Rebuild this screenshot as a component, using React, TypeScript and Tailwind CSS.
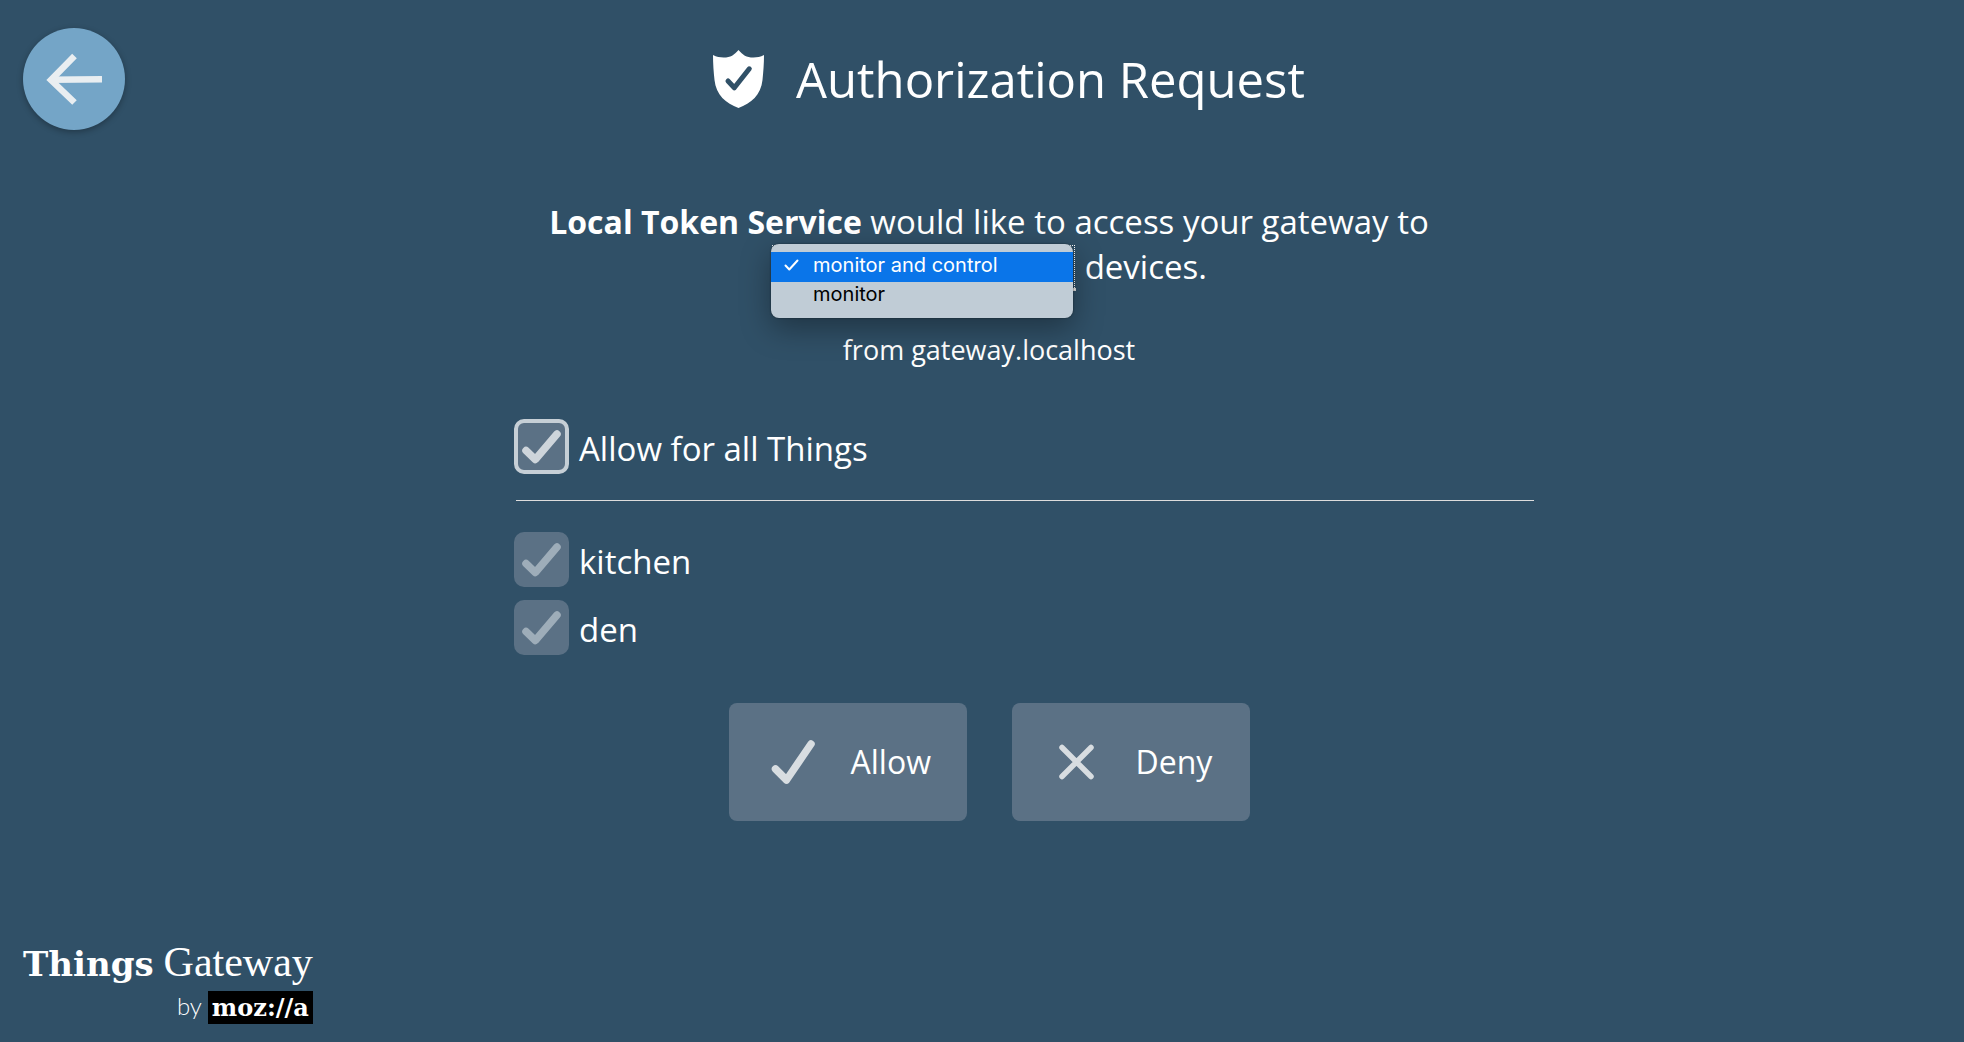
import { useState } from "react";

function BackArrow() {
  return (
    <svg viewBox="0 0 102 102" className="h-full w-full" fill="none" stroke="#e9eef1" strokeWidth="6.5" aria-hidden="true">
      <path d="M51.5 28 L28 52 L51.5 74.5" />
      <path d="M28 51.8 L79 51.2" />
    </svg>
  );
}

function Shield() {
  return (
    <svg viewBox="0 0 51 58" className="h-[58px] w-[51px]" aria-hidden="true">
      <path
        fill="#fff"
        d="M25.500 0 C30 5 33 7.500 40.500 7.500 C44 7.500 47.500 6.800 51 5 C51 14 50.300 22 49.500 30 C48 45 38 53.500 25.500 58 C13 53.500 3 45 1.500 30 C.7 22 0 14 0 5 C3.500 6.800 7 7.500 10.500 7.500 C18 7.500 21 5 25.500 0Z"
      />
      <path d="M15 31 L21.300 37.800 L36.300 18.800" fill="none" stroke="#305067" strokeWidth="5" strokeLinecap="round" strokeLinejoin="round" />
    </svg>
  );
}

function Tick({ className }: { className: string }) {
  return (
    <svg viewBox="0 0 55 55" className={className} fill="none" stroke="currentColor" strokeWidth="7.5" strokeLinecap="round" strokeLinejoin="round" aria-hidden="true">
      <path d="M12 31.500 L21.300 40.500 L43 15" />
    </svg>
  );
}

function AllowIcon() {
  return (
    <svg viewBox="0 0 48 48" className="size-12" fill="none" stroke="#d8dde1" strokeWidth="7.5" strokeLinecap="round" strokeLinejoin="round" aria-hidden="true">
      <path d="M6.500 31 L17.500 42 L42 6" />
    </svg>
  );
}

function DenyIcon() {
  return (
    <svg viewBox="0 0 48 48" className="size-12" fill="none" stroke="#d8dde1" strokeWidth="5.5" strokeLinecap="round" aria-hidden="true">
      <path d="M10 9.500 L39 38.500 M39 9.500 L10 38.500" />
    </svg>
  );
}

type ThingProps = { id: string; label: string; checked: boolean; disabled?: boolean; onChange?: () => void };

function ThingCheckbox({ id, label, checked, disabled, onChange }: ThingProps) {
  return (
    <div className="flex items-center gap-2.5">
      <span className="relative block size-[55px] shrink-0">
        <input
          id={id}
          type="checkbox"
          checked={checked}
          disabled={disabled}
          onChange={onChange}
          readOnly={!onChange}
          className="block size-full appearance-none rounded-[10px] bg-[#5b7185] outline-none enabled:border-4 enabled:border-[#c6cfd6]"
        />
        {checked && (
          <Tick className={disabled ? "pointer-events-none absolute inset-0 text-[#9eadb9]" : "pointer-events-none absolute inset-0 text-[#ced5db]"} />
        )}
      </span>
      <label htmlFor={id} className="pt-1 leading-[45px]">{label}</label>
    </div>
  );
}

const scopes = ["monitor and control", "monitor"];

function ScopeSelect() {
  const [scope, setScope] = useState(scopes[0]);
  return (
    <span className="relative inline-block h-[45px] w-[305px] align-top">
      <select
        aria-label="Access"
        value={scope}
        onChange={(e) => setScope(e.target.value)}
        className="block h-[47px] w-full appearance-none border-b-3 border-[#dddddd] px-2 text-[28px] leading-none text-transparent outline-1 -outline-offset-2 outline-dotted outline-white"
      >
        {scopes.map((s) => (
          <option key={s}>{s}</option>
        ))}
      </select>
      <ul
        role="listbox"
        aria-label="Access options"
        className="absolute top-0 left-0 z-10 h-[74px] w-[302px] rounded-lg bg-[#c0ccd6] pt-2 text-left font-[Inter,sans-serif] text-[20px] shadow-[0_10px_30px_rgba(0,0,0,0.35),0_0_2px_rgba(0,0,0,0.5)]"
      >
        {scopes.map((s) => (
          <li
            key={s}
            role="option"
            aria-selected={s === scope}
            onClick={() => setScope(s)}
            className={
              s === scope
                ? "flex h-[30px] items-center bg-[#0a75e9] pb-1 leading-[26px] text-white"
                : "flex h-7 items-center pb-1 leading-6 text-black"
            }
          >
            <span className="flex w-[42px] justify-center pr-0.5">
              {s === scope && (
                <svg viewBox="0 0 15 12" className="h-3 w-[15px]" fill="none" stroke="#fff" strokeWidth="2" strokeLinecap="round" strokeLinejoin="round" aria-hidden="true">
                  <path d="M1.500 6.500 L5.300 10.500 L13.500 1.500" />
                </svg>
              )}
            </span>
            {s}
          </li>
        ))}
      </ul>
    </span>
  );
}

export default function App() {
  const [all, setAll] = useState(true);
  return (
    <div className="flex min-h-screen flex-col bg-[#305067] font-['Open_Sans',sans-serif] text-[33px] text-white">
      <header className="flex items-center pt-7 pr-[71px] pl-[23px]">
        <button aria-label="Back" className="size-[102px] shrink-0 rounded-full bg-[#74a5c7] shadow-[0_2px_6px_rgba(0,0,0,0.3)]">
          <BackArrow />
        </button>
        <h1 className="flex flex-1 items-center justify-center gap-8 text-[49px] leading-[68px]">
          <Shield />
          Authorization Request
        </h1>
      </header>

      <main className="flex flex-col items-center pt-[69px] pl-3.5">
        <p className="max-w-[1020px] text-center leading-[45px]">
          <strong className="text-[32px] font-bold">Local Token Service</strong> would like to access your gateway to <ScopeSelect /> devices.
        </p>
        <p className="mt-[41px] text-[27px] leading-[40px]">from gateway.localhost</p>

        <form className="flex w-full flex-col items-center" onSubmit={(e) => e.preventDefault()}>
          <div className="mt-[49px] ml-[70px] w-full max-w-[1020px]">
            <ThingCheckbox id="all" label="Allow for all Things" checked={all} onChange={() => setAll(!all)} />
            <hr className="mt-[26px] mb-[31px] ml-0.5 border-t border-[#dddddd]" />
            <div className="flex flex-col gap-[13px]">
              <ThingCheckbox id="kitchen" label="kitchen" checked disabled={all} />
              <ThingCheckbox id="den" label="den" checked disabled={all} />
            </div>
          </div>

          <div className="mt-12 flex gap-[45px] text-[32px]">
            <button type="submit" className="flex h-[118px] min-w-[238px] items-center gap-[34px] rounded-lg bg-[#5b7185] pr-[34px] pl-10">
              <AllowIcon />
              Allow
            </button>
            <button type="button" className="flex h-[118px] min-w-[238px] items-center gap-9 rounded-lg bg-[#5b7185] pr-[34px] pl-10">
              <DenyIcon />
              Deny
            </button>
          </div>
        </form>
      </main>

      <footer className="mt-auto flex flex-col items-end self-start pb-4 pl-[23px] font-['DejaVu_Serif',serif]">
        <div className="flex items-baseline gap-2.5 leading-[50px]">
          <strong className="text-[34px] font-bold">Things</strong>
          <span className="font-['Liberation_Serif',serif] text-[42px]">Gateway</span>
        </div>
        <div className="flex items-center gap-1.5">
          <span className="pb-1 font-[Lato,sans-serif] text-[24px] leading-[33px] font-light">by</span>
          <span className="flex h-[33px] items-center bg-black px-1 text-[24px] leading-[33px] font-bold">moz://a</span>
        </div>
      </footer>
    </div>
  );
}
